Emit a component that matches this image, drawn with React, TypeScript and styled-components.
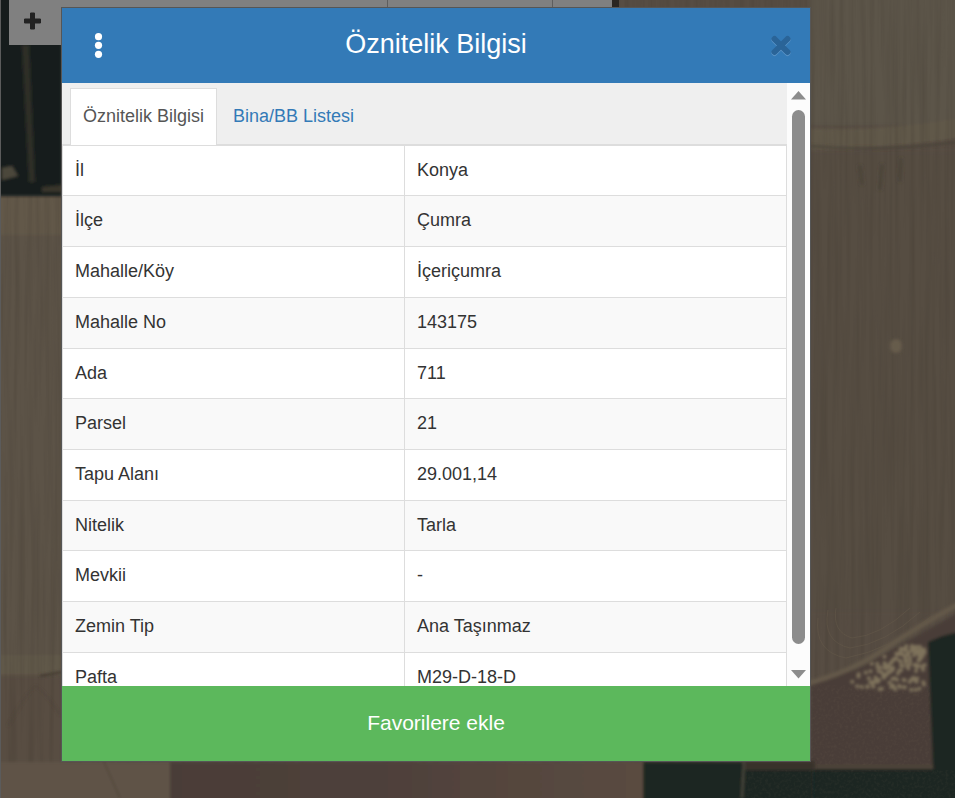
import React from 'react';
import styled, { createGlobalStyle } from 'styled-components';

const GlobalStyle = createGlobalStyle`
  html, body {
    margin: 0;
    padding: 0;
    height: 100%;
    overflow: hidden;
    background: #574d43;
  }
  * {
    box-sizing: border-box;
  }
`;

const Page = styled.div`
  position: relative;
  width: 100%;
  height: 100vh;
  padding: 7px 0 0 61px;
  font-family: "Liberation Sans", Arial, sans-serif;
  font-size: 18px;
  line-height: 1.42857;
  color: #333;
`;

const MapLayer = styled.svg`
  position: absolute;
  inset: 0;
  width: 100%;
  height: 100%;
`;

const TopBar = styled.div`
  position: absolute;
  top: 0;
  left: 9px;
  width: 603px;
  height: 8px;
  background: #808080;
  display: flex;
  justify-content: flex-end;
`;

const BarCell = styled.div<{ $width: number }>`
  width: ${(p) => p.$width}px;
  height: 100%;
  border-left: 1px solid #5e5e5e;
`;

const ZoomButton = styled.button`
  position: absolute;
  top: 0;
  left: 9px;
  width: 53px;
  height: 45px;
  padding: 0;
  border: none;
  background: #808080;
`;

const Modal = styled.div`
  position: relative;
  width: 750px;
  height: 755px;
  border: 1px solid rgba(30, 30, 30, 0.75);
  display: flex;
  flex-direction: column;
  background: #fff;
`;

const Header = styled.div`
  position: relative;
  height: 75px;
  flex: none;
  background: #337ab7;
  display: flex;
  align-items: center;
  justify-content: center;
  color: #fff;
  font-size: 27px;
  padding-bottom: 3px;
`;

const MenuIcon = styled.svg`
  position: absolute;
  left: 31px;
  top: 22px;
`;

const CloseIcon = styled.svg`
  position: absolute;
  right: 19px;
  top: 27px;
`;

const Body = styled.div`
  flex: 1;
  min-height: 0;
  display: flex;
`;

const Content = styled.div`
  width: 725px;
  flex: none;
  overflow: hidden;
`;

const Tabs = styled.div`
  height: 62px;
  background: #efefef;
  padding: 5px 0 0 8px;
  display: flex;
  align-items: flex-start;
  border-bottom: 1px solid #ddd;
`;

const Tab = styled.div<{ $active?: boolean }>`
  height: 57px;
  padding: 0 ${(p) => (p.$active ? '12px' : '15px')} 1px;
  display: flex;
  align-items: center;
  background: ${(p) => (p.$active ? '#fff' : 'transparent')};
  color: ${(p) => (p.$active ? '#555' : '#337ab7')};
  border: 1px solid ${(p) => (p.$active ? '#ddd' : 'transparent')};
  border-bottom: none;
`;

const Table = styled.table`
  width: 725px;
  table-layout: fixed;
  border-collapse: collapse;
  border-top: 1px solid #ddd;
`;

const Row = styled.tr`
  &:nth-child(even) {
    background: #f9f9f9;
  }
`;

const Cell = styled.td<{ $label?: boolean; $height: number }>`
  width: ${(p) => (p.$label ? '342px' : 'auto')};
  height: ${(p) => p.$height}px;
  padding: 0 12px;
  border: 1px solid #ddd;
  border-top: none;
  vertical-align: middle;
`;

const ScrollBar = styled.div`
  width: 23px;
  flex: none;
  background: #fcfcfc;
  display: flex;
  flex-direction: column;
  align-items: center;
  padding-top: 8px;
`;

const Thumb = styled.div`
  width: 13px;
  height: 534px;
  margin: 10px 0 26px;
  border-radius: 7px;
  background: #8c8c8c;
`;

const Footer = styled.div`
  height: 75px;
  flex: none;
  background: #5cb85c;
  display: flex;
  align-items: center;
  justify-content: center;
  color: #fff;
  font-size: 21px;
  padding-bottom: 2px;
`;

const rows: [string, string, number][] = [
  ['İl', 'Konya', 50],
  ['İlçe', 'Çumra', 51],
  ['Mahalle/Köy', 'İçeriçumra', 51],
  ['Mahalle No', '143175', 51],
  ['Ada', '711', 50],
  ['Parsel', '21', 51],
  ['Tapu Alanı', '29.001,14', 51],
  ['Nitelik', 'Tarla', 50],
  ['Mevkii', '-', 51],
  ['Zemin Tip', 'Ana Taşınmaz', 51],
  ['Pafta', 'M29-D-18-D', 51],
];

const noise = (n: number) => {
  const v = Math.sin(n * 12.9898) * 43758.5453;
  return v - Math.floor(v);
};

// speckled patch of the field in the lower right corner
const specks = Array.from({ length: 150 }, (_, i) => {
  const t = noise(i + 1);
  const y = 646 + t * 44;
  const left = 905 - Math.min(t * 1.6, 1) * 55;
  const x = left + noise(i + 200) * (925 - left);
  return { x, y, key: i };
});

function FieldMap() {
  return (
    <MapLayer viewBox="0 0 955 798" preserveAspectRatio="none">
      <defs>
        <filter id="streaks" x="0" y="0" width="100%" height="100%" colorInterpolationFilters="sRGB">
          <feTurbulence type="fractalNoise" baseFrequency="0.2 0.006" numOctaves="3" seed="4" />
          <feColorMatrix values="0 0 0 0 0.2  0 0 0 0 0.17  0 0 0 0 0.14  1.5 0 0 0 -0.55" />
        </filter>
        <filter id="grain" x="0" y="0" width="100%" height="100%" colorInterpolationFilters="sRGB">
          <feTurbulence type="fractalNoise" baseFrequency="0.35" numOctaves="2" seed="9" />
          <feColorMatrix values="0 0 0 0 0.45  0 0 0 0 0.4  0 0 0 0 0.33  1.4 0 0 0 -0.6" />
        </filter>
        <filter id="soft" x="-5%" y="-5%" width="110%" height="110%">
          <feGaussianBlur stdDeviation="1.5" />
        </filter>
        <linearGradient id="plot" x1="0" y1="0" x2="1" y2="0">
          <stop offset="0" stopColor="#4a3d38" />
          <stop offset="0.45" stopColor="#4e403a" />
          <stop offset="1" stopColor="#5a4b41" />
        </linearGradient>
      </defs>

      <rect width="955" height="798" fill="#574d43" />

      <g filter="url(#soft)">
        {/* left field */}
        <rect x="-4" y="195" width="66" height="40" fill="#625849" />
        <rect x="-4" y="235" width="66" height="440" fill="#5c5346" />
        <rect x="-4" y="655" width="66" height="20" fill="#61584a" />
        <rect x="-4" y="677" width="66" height="90" fill="#584d42" />

        {/* right field */}
        <rect x="810" y="-4" width="149" height="129" fill="#5c5448" />
        <path d="M810 128 Q880 132 959 118 L959 138 Q880 150 810 150 Z" fill="#60584a" />
        <rect x="810" y="152" width="149" height="460" fill="#574d43" />
      </g>

      <rect width="955" height="798" filter="url(#streaks)" opacity="0.22" />

      <g filter="url(#soft)">
        {/* dark patch behind the zoom button */}
        <rect x="-4" y="-4" width="66" height="200" fill="#151f1c" />
        <path d="M22 45 L29 182 L35 182 L29 45 Z" fill="#2f2d26" />
        <path d="M2 168 L12 166 L18 176 L2 180 Z" fill="#4c473b" />
        <path d="M42 187 L62 185 L62 192 L42 192 Z" fill="#37352c" />

        {/* field edges on the left */}
        <path d="M40 676 L62 672" stroke="#3e362e" strokeWidth="2" fill="none" />
        <path d="M8 726 Q28 690 36 686 Q48 695 60 715" stroke="#4a4036" strokeWidth="1" fill="none" />

        {/* bands on the right */}
        <path d="M810 146 Q880 152 959 142" stroke="#4a4238" strokeWidth="2" fill="none" />
        <path d="M860 165 L862 185 M882 164 L880 190 M901 158 L900 182" stroke="#453d34" strokeWidth="4" opacity="0.5" />
        <ellipse cx="896" cy="346" rx="6" ry="7" fill="#665b4c" />

        {/* lower right: brown plot, road and dark ground */}
        <path d="M810 684 L860 668 Q910 640 959 612 L959 802 L810 802 Z" fill="#483c37" />
        <path d="M806 684 Q850 672 880 652 Q920 625 959 604" stroke="#645949" strokeWidth="5" fill="none" />
        <path d="M928 642 Q945 634 959 632 L959 802 L810 802 L810 769 L933 769 Z" fill="#1f2521" />
        <path d="M810 767 L933 767" stroke="#4f463b" strokeWidth="3" />
      </g>

      {/* swirl above the road */}
      <g stroke="#635849" strokeWidth="1" fill="none" opacity="0.6">
        <path d="M836 608 Q832 632 852 638 Q880 636 910 608" />
        <path d="M828 610 Q822 642 850 648 Q885 644 920 612" />
        <path d="M818 618 Q814 652 846 658 Q890 650 932 616" />
      </g>

      <rect x="810" y="685" width="120" height="80" filter="url(#grain)" opacity="0.25" />
      <g fill="#7f735c" filter="url(#soft)">
        {specks.map((s) => (
          <circle key={s.key} cx={s.x} cy={s.y} r="2" />
        ))}
      </g>

      {/* strip below the panel */}
      <g filter="url(#soft)">
        <rect x="-4" y="762" width="174" height="40" fill="#5f5347" />
        <rect x="170" y="762" width="473" height="40" fill="url(#plot)" />
        <rect x="643" y="762" width="170" height="40" fill="#1f2822" />
        <rect x="745" y="761" width="70" height="9" fill="#38302c" />
        <path d="M104 762 L120 798" stroke="#483f35" strokeWidth="1" />
        <path d="M744 762 L742 798" stroke="#4d4a3f" strokeWidth="2" />
      </g>
      <rect x="746" y="770" width="209" height="28" filter="url(#grain)" opacity="0.2" />

      {/* dark corner right of the top bar */}
      <rect x="612" y="0" width="7" height="8" fill="#2a2622" />

      {/* gray edge of the window */}
      <rect x="0" y="0" width="1" height="798" fill="#5b5b5b" />
    </MapLayer>
  );
}

function App() {
  return (
    <Page>
      <GlobalStyle />
      <FieldMap />
      <TopBar>
        <BarCell $width={165} />
        <BarCell $width={60} />
      </TopBar>
      <ZoomButton>
        <svg width="53" height="45" viewBox="0 0 53 45">
          <path d="M21.500 13h4v6h6v4h-6v6h-4v-6h-6v-4h6z" fill="#222" stroke="#222" strokeWidth="1" strokeLinejoin="round" />
        </svg>
      </ZoomButton>

      <Modal>
        <Header>
          Öznitelik Bilgisi
          <MenuIcon width="14" height="34" viewBox="0 0 14 34">
            <circle cx="5.500" cy="6.700" r="3.600" fill="#fff" />
            <circle cx="5.500" cy="15.300" r="3.600" fill="#fff" />
            <circle cx="5.500" cy="24.300" r="3.600" fill="#fff" />
          </MenuIcon>
          <CloseIcon width="20" height="22" viewBox="0 0 20 22">
            <path d="M3.500 5 L16.500 18 M16.500 5 L3.500 18" stroke="#5d95c8" strokeWidth="6" strokeLinecap="round" />
            <path d="M3.500 4 L16.500 17 M16.500 4 L3.500 17" stroke="#2a6498" strokeWidth="6" strokeLinecap="round" />
          </CloseIcon>
        </Header>

        <Body>
          <Content>
            <Tabs>
              <Tab $active>Öznitelik Bilgisi</Tab>
              <Tab>Bina/BB Listesi</Tab>
            </Tabs>
            <Table>
              <tbody>
                {rows.map(([label, value, height]) => (
                  <Row key={label}>
                    <Cell $label $height={height}>{label}</Cell>
                    <Cell $height={height}>{value}</Cell>
                  </Row>
                ))}
              </tbody>
            </Table>
          </Content>
          <ScrollBar>
            <svg width="15" height="9" viewBox="0 0 15 9">
              <path d="M7.500 0 L15 8.500 L0 8.500 Z" fill="#8c8c8c" />
            </svg>
            <Thumb />
            <svg width="15" height="9" viewBox="0 0 15 9">
              <path d="M0 0 L15 0 L7.500 8.500 Z" fill="#8c8c8c" />
            </svg>
          </ScrollBar>
        </Body>

        <Footer>Favorilere ekle</Footer>
      </Modal>
    </Page>
  );
}

export default App;
